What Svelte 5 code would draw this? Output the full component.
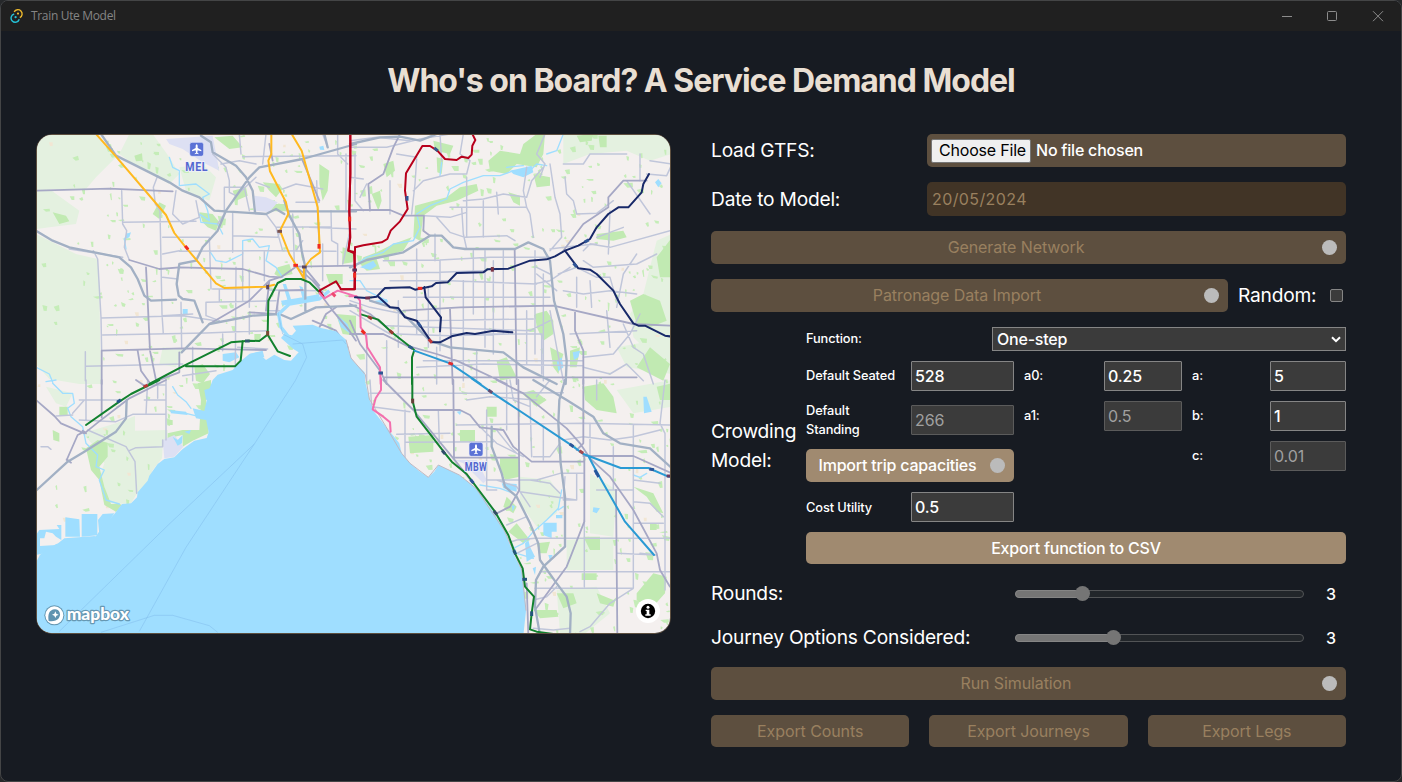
<script>
  // Map geometry is kept in four tiles; every tile has its own local origin.
  const tiles = { nw: [0, 0], ne: [942, 0], sw: [0, 738], se: [942, 738] };
  const move = (q) => `translate(${tiles[q][0]} ${tiles[q][1]})`;

  let seed = 11;
  const rnd = () => {
    seed = (seed * 16807) % 2147483647;
    return seed / 2147483647;
  };
  const parks = [];
  for (let i = 0; i < 950; i++) {
    const x = rnd() * 1905;
    const y = rnd() * 1500;
    const w = 5 + rnd() * rnd() * 24;
    const h = 5 + rnd() * rnd() * 20;
    const s = (rnd() - 0.5) * 12;
    if (x < 190 && rnd() < 0.7) continue;
    parks.push(`M${x.toFixed(0)} ${y.toFixed(0)}l${w.toFixed(0)} ${s.toFixed(0)}l${(-s / 2).toFixed(0)} ${h.toFixed(0)}l${(-w * 0.6).toFixed(0)} ${(-s / 3).toFixed(0)}z`);
  }
  const parkPath = parks.join('');
  const sand = [];
  for (let i = 0; i < 60; i++) {
    sand.push(`M${(rnd() * 1905).toFixed(0)} ${(rnd() * 1500).toFixed(0)}h${(6 + rnd() * 9).toFixed(0)}v${(6 + rnd() * 9).toFixed(0)}h-8z`);
  }
  const sandPath = sand.join('');

  const pale = [
    ['nw', 'M0 0H175L240 70 180 130 150 165H40L130 230 120 270 40 280 0 285ZM0 300L60 330 120 360 185 375 190 470 195 750 130 750 40 735 0 690ZM280 0H350L400 70 430 120 400 150 300 95 250 60ZM430 100L500 90 540 130 520 200 450 170ZM380 640L440 645 420 700 370 690Z'],
    ['ne', 'M640 0H966V60L900 80 830 50 720 60 640 90ZM860 10H920V60H860ZM920 320L966 300V700L900 660 850 610 840 540 880 480ZM800 640L966 610V720L830 700Z'],
    ['sw', 'M140 160L240 130 297 108 297 152 395 150 395 180 380 200 378 235 350 270 335 310 300 345 285 370 240 372 215 368 205 320 190 295 205 250 180 205ZM30 20L110 40 90 80 60 70Z'],
    ['se', 'M510 290L600 300 635 350 620 400 560 440 510 370ZM650 480L790 470V570H650ZM720 280L800 330 790 470 720 460ZM620 630L740 620 780 700 700 765 630 760ZM800 30L966 0V80L850 100Z']
  ];
  const green = [
    ['nw', 'M490 235L530 240 550 265 540 290 515 280 500 265ZM295 65L318 58 320 80 300 82ZM50 235L90 245 100 262 70 270ZM725 400L760 390 770 420 730 430 715 420ZM680 145L730 150 740 165 720 190 700 170ZM850 90L880 110 875 170 860 200 850 150ZM535 10L590 5 620 40 580 45ZM700 210L750 210 750 232 705 232ZM900 540L960 545 960 605 920 600ZM655 600L675 600 672 620 655 620ZM475 700L500 690 522 720 500 748 480 740ZM920 340L955 350 950 385 918 390ZM870 420H920V450H880ZM350 240L370 205 390 215 370 255ZM590 170L630 160 635 185 600 200Z'],
    ['ne', 'M100 90L130 80 135 110 110 130ZM65 180L90 170 95 200 85 230ZM195 215L250 200 290 190 330 160 380 150 385 170 320 200 260 215 220 245 210 320 190 310ZM415 80L450 50 510 60 520 30 560 0H585L580 60 560 100 500 90 470 120 420 110ZM260 70L280 75 275 120 262 115ZM550 120L600 130 600 155 560 160ZM475 175L510 185 510 215 490 205ZM555 540L590 530 610 560 610 600 580 620 560 580ZM840 500L880 480 930 500 950 560 900 580 860 570ZM440 680L470 670 500 730 450 740ZM660 650L690 640 680 700 660 700ZM740 300L820 290 830 310 790 320 740 315ZM680 5L730 0 725 20 690 25ZM745 5H770V40H750ZM920 370L966 310V430L930 430ZM40 370L80 355 130 330 185 310 160 350 80 375 90 405 50 410 30 390ZM600 640L640 660 625 720 610 700ZM860 700L900 640 960 690 940 740ZM250 20L310 35 300 60 255 50Z'],
    ['sw', 'M150 205L185 180 215 188 215 230 190 260 205 320 225 372 255 372 240 395 205 375 190 300 165 270ZM395 160L440 150 490 150 495 60 485 10 525 0 525 40 510 60 515 120 518 160 470 182 440 200 440 165 395 175ZM70 80H95V108H70ZM240 378L258 374 240 396 232 390ZM395 120H410V135H395ZM50 150L70 160 70 185 52 180Z'],
    ['se', 'M175 170L250 165 250 215 180 220ZM330 150H375V185H330ZM450 235H508V290L465 300 450 260ZM500 430L540 480 520 490 475 455ZM700 20L760 10 790 50 800 100 740 90 705 60ZM515 40L550 30 590 60 560 80ZM860 640L910 580 950 590 945 640 900 690 860 660ZM620 640L670 640 680 670 640 685ZM550 690L620 690 625 710 570 715ZM700 470H750V510H720ZM560 490L600 485 590 520 570 520ZM850 320L910 340 940 400 920 395 890 350ZM470 350L500 380 490 400 460 380ZM740 640L790 660 800 650 790 680 750 670ZM695 580H740V600H695ZM920 20L966 10V60H930ZM410 80H440V110H410ZM900 430H920V450H900ZM15 10L45 20 60 60 50 60Z']
  ];
  const lav = [
    ['nw', 'M390 15L530 5 550 110 500 85 440 45 400 30ZM655 185L690 190 725 205 700 235 660 230Z'],
    ['sw', 'M380 180L415 165 442 200 415 230 385 235Z'],
    ['se', 'M312 240L380 240 410 300 400 310 340 250Z']
  ];
  const ponds = [
    ['nw', 'M560 660L600 655 610 670 580 685 560 680ZM440 525H455V540H440ZM850 38L862 35 865 48 852 47ZM900 540L935 570 945 600 915 580ZM270 300L285 295 280 310 268 315ZM735 500L800 490 850 480 850 492 790 502 740 515ZM740 450L750 450 765 495 755 500ZM790 455L800 460 810 490 800 495ZM640 660L680 650 685 670 650 670Z'],
    ['ne', 'M915 145L925 135 935 148 925 160ZM620 680L635 670 640 700 625 712ZM668 655L690 650 685 670 672 678ZM75 500L110 495 115 505 80 510ZM30 400L70 380 80 395 60 408ZM480 110L545 95 550 115 520 130 490 120Z'],
    ['sw', 'M88 412L130 418 132 470H88ZM137 402H184V466L137 470ZM186 420L200 402 235 400 190 466ZM0 465L10 450 70 447 62 435 76 435 76 480 60 470 50 460 30 455 25 475 12 475 12 498 60 495 85 475 180 468 130 500 0 525ZM410 170L425 180 440 165 438 190 425 197ZM402 90L450 95 455 105 405 100ZM470 85L515 95 510 120 480 115ZM505 30L522 25 525 55 510 60ZM445 155L465 150 460 162Z'],
    ['se', 'M580 428H620V455H605V475L580 465ZM618 405H637V415H618ZM730 382L750 385 740 400 728 395ZM880 50L890 50 905 95 882 100ZM525 490L535 480 540 500 555 530 530 545ZM455 310L500 312 500 335 460 325ZM320 95L335 92 330 105ZM485 375L495 378 488 395ZM595 525L608 525 600 542ZM548 565L558 560 555 585Z']
  ];
  const creeks = [
    ['nw', 'M400 70L410 100 430 110 430 155 480 150 520 180 500 190 515 230 520 260 490 240 495 265 545 270 560 300M520 350L540 380 570 385 620 360 620 320 650 315 670 340 700 335 690 380 720 400 740 430M275 300L265 315 270 345M0 700L40 720 50 745'],
    ['ne', 'M590 95L560 90 530 120 490 110 450 125 400 125 340 145 300 165 290 195 240 215 200 240 210 280 190 320 130 330 100 355 50 370 20 390M275 85L270 125M590 60L620 50 640 0M470 100L520 95M0 440L30 440 50 470 90 490 110 500'],
    ['sw', 'M50 10L80 40 110 40 115 70 95 85 105 110 140 140 150 190 185 225 180 260 205 270 190 300 210 360 250 372M60 0L30 5M410 20L425 45 450 65 465 85M450 100L490 110'],
    ['se', 'M635 330L625 385 590 420 550 455 520 490 480 510M390 315L450 325 490 340M440 400L500 520 550 535M850 285L870 292 890 280M640 380L625 390']
  ];
  const minor = [
    ['nw', 'M257 170L260 270 272 290 265 340 280 378M365 125L352 160 358 210 372 230 378 540 382 600M520 310L525 465M590 235V355M600 400L598 700M770 240L775 385M842 140L845 235M905 0V60L935 90M885 230L887 320 905 330 905 395M172 350L185 375 195 550 197 650M435 505L437 640M510 505V545L550 560M655 235L690 240 720 280 740 350M550 465V500M640 410V520M685 350V440M725 500V530M860 330V440M930 60V230M940 300L920 390M620 355V500M260 265L480 262M380 310L520 310M195 552L440 545 540 560M200 603L510 597 695 590M148 697L440 690M148 653V740M720 280L885 278M565 160H625L640 230M565 160V240L545 270M620 68L960 65M430 352L690 350 900 352M530 465H620M510 505L720 500M700 468L850 470M380 545L470 540M605 640L695 645M555 90L610 80 660 90M480 200L490 250 440 270 410 240 420 170M740 165L780 150 860 165M660 145L700 160M780 205H850M100 345L260 370M530 60L570 100 580 140 580 175 600 185 660 130M690 0L680 90M610 0L615 60M860 0L875 40M380 360L430 350M380 430L425 435M470 640V740M640 540V600M690 530H730M560 600V650M440 725L540 710M780 350L800 320M590 305L725 310 735 285M820 280L960 285'],
    ['ne', 'M0 40L110 40 210 15 300 0M0 20L80 10 180 20M200 75L195 150 185 240M270 0L275 80M15 60V200L40 230M0 130L40 135M340 0L330 60 360 80 350 120 300 120 220 140 190 170M335 220L340 300 350 345M225 245L300 250 350 235M350 130L350 310M400 200V310M440 175L445 240M340 200L400 195 460 180 530 190 545 140 580 100M300 220H530M260 250L300 295 345 310 470 305 495 320M530 100L520 170 530 220 540 240 550 310M585 0L560 60 585 90 570 130M600 90L615 190 630 240 635 310 600 350M640 90L700 90 720 60 830 60M645 130L650 180 670 200 680 240 740 238 790 200M870 60V140M830 140L900 240M890 120L950 125 966 90M900 80L966 90M15 420L270 415 400 410M100 380L270 378 420 370 600 370M120 440L300 440 560 450M0 465H120M160 490L600 490M200 560L550 555M110 575L540 590 600 560M200 345V600M235 460V640M270 380V650M340 440V740M370 350V540M405 350V640M430 380V660M460 350V600M555 350V660M580 420V740M255 300V380M305 600H575V720M700 380L730 400 860 390 920 360M625 420L680 400 740 430 780 430 800 500M600 345L680 335 740 330M660 400L600 440 550 450M600 420L560 400M700 350L720 330 780 340 960 290M780 230L775 360M820 280L740 310M860 360L820 420 800 520M640 470L700 480 780 470 860 480M680 520V430M720 440L725 520M600 530L620 640 640 740M700 670L790 660 840 600 870 540M820 570L850 640 880 660 910 750M700 700L780 720 830 690 880 740M770 530L780 640M530 530V690M140 600L300 605 480 600M220 680H700M200 700L400 690 700 695M50 600V740M110 620V750M145 500V640M0 500L60 520 160 540M0 530L120 600M260 640V750M380 650V740M660 600L860 590M620 470L560 420M50 150L30 190M120 140V240M140 60L200 70'],
    ['sw', 'M150 0V120M130 60H250M110 100L145 60M335 0L330 103M390 0V180M130 120L240 125 290 103 390 103M155 150L270 200 297 245 302 340M280 212L300 203 380 200M380 180V200M365 0V55M320 15L390 15M60 108L110 105M15 200L35 200 45 208M325 60L390 60'],
    ['se', 'M110 40L310 40 640 38M165 90V240M265 90L268 190M165 187L430 185M140 163L300 160M410 90V330L440 330M470 0V150M60 0L65 80 180 95M320 135L700 130 960 135M350 60L420 50 560 60M410 300L560 300 630 280 700 280M510 335L680 360M440 500L500 480 555 475 960 475M570 575L960 575M555 625L850 625M850 135V340L850 625 780 670 720 740 690 755M945 0L930 130 945 160V630M790 200V330M645 290L640 360 680 360 680 280M703 420V620M540 300L600 310 630 340M440 150L480 200 500 220M390 140L440 190 520 230M550 660L590 650 620 620M550 745L610 750 660 745M870 520L920 525M850 300L930 310M850 365L900 370 940 410M500 520L560 490M740 0V60M640 180L700 170 780 180 850 170 930 150M720 130V230M630 190L600 230 550 230M470 435L530 410M440 300L500 320 540 380M480 0L490 60 540 80M60 40H110M800 520L920 525M600 0L560 50M540 60L545 230M580 140V240M850 430H940M740 330H850']
  ];
  const major = [
    ['nw', 'M0 170L220 164 410 172M280 378L370 405 430 400 620 405 700 428 735 430 780 398 960 395M330 400L335 500 342 650 362 748M197 750V650L440 643 690 648M305 650L315 710 340 745M520 570L640 500 700 440 730 430M780 398L830 440 860 475M700 440L690 530M805 400L850 455M845 230L850 330M860 490L890 530 940 590 960 620M850 580L870 540 900 520M830 560L900 590 935 640M640 535L720 540 730 470 800 468M430 655L430 715 350 745M700 30L710 80M800 80L850 200'],
    ['ne', 'M150 0L130 40 100 120 55 150 60 230M0 228H120L160 245 222 245 220 290 240 305M494 345L500 750M160 530L330 520 610 515 850 570 966 575M640 350L700 270 775 220 775 190 820 140 890 140M675 530V590L700 650V750M300 525L308 750M0 560L30 630 90 710 110 750M170 635L260 660 320 680 470 750M100 730H860M0 600L100 600 180 640M0 510L60 540 110 580'],
    ['sw', 'M0 60L55 108 75 130 145 160 185 128 280 55 390 0M197 0V112M92 240L125 165 145 155M92 238L105 248M300 0L330 20M140 152L150 160'],
    ['se', 'M505 0L508 330 480 380 440 400M310 0L312 235M190 90H330L360 105 390 142 460 150 490 200 545 245H700M700 0V190L680 210M703 225V425L650 560 555 690M440 0L520 40 650 145 690 190 720 235 780 290 850 390 920 520 930 570 960 620M310 233H505M700 228H850L966 280M798 330L802 765M100 0L190 90 310 235 370 310M530 610L535 765']
  ];
  const highway = [
    ['nw', 'M195 0L240 65 300 95 400 145 440 170 490 190 535 230 690 240 720 225 745 240 M760 232H960M0 290L50 320 100 340 250 370 285 400 305 435 325 485 345 500 420 497M495 5L525 25 530 55 600 95 630 130 650 170 657 235M960 30L800 75 670 100 640 130 570 230 545 290 500 340 480 380 430 390 422 450 428 485 440 495 475 500 500 565M745 200L760 245 790 300 797 350 808 400 808 530M437 655L520 570 650 545 730 540 765 555 840 520 960 515M865 0L875 40'],
    ['ne', 'M0 30L90 10 150 8 210 20 260 0M0 400L50 378 160 355 240 305 275 305 310 340 345 345 495 345 535 325 580 345 600 380 612 500 640 600 650 680 647 750M60 500L140 525 180 560 240 620 300 640 460 655 520 700 620 750'],
    ['sw', 'M0 332L95 245 145 215 240 155 270 115 272 60'],
    ['se', 'M645 0L628 60 625 130 632 250 645 350 645 500 580 560 558 600 555 680 570 765M550 0L650 60 730 110 760 160 810 190 900 205 966 265M425 140L425 200 455 280 465 320 500 350 540 430 565 490 570 540 620 610 650 650 662 700 660 765']
  ];

  const lines = [
    ['nw', '#ffb91f', 'M180 0L235 62 390 243 415 297 447 337 540 448 565 462 690 458 715 452M706 0V60L697 80 702 112 750 205 757 240 732 290 760 360 780 394 805 436M767 0L797 50 845 220 852 355 825 375 804 402 803 436'],
    ['nw', '#12812e', 'M340 750L440 697 585 625 640 620 670 621 695 602 697 500 725 447 750 435 795 435 820 445 850 474M450 697H597L614 680 620 622M695 602L725 652 762 666'],
    ['nw', '#b8001c', 'M943 0V120L940 230 943 310 937 350 955 358M957 340L955 466H915L900 442 850 470 862 487'],
    ['nw', '#f36fae', 'M850 477L865 493 905 470 960 487'],
    ['ne', '#b8001c', 'M1 0V120L-2 230 0 310-5 350 15 355 15 340 40 334 95 325 112 315 122 290 150 262 173 225 165 170 168 118 217 36 240 36 262 50 285 75 320 78 335 68 355 72 365 62 367 35 376 18 368 2M12 355L15 420V466H-28'],
    ['ne', '#12812e', 'M33 541L85 557 125 595 193 648 186 670V750'],
    ['ne', '#f36fae', 'M-2 487H20L30 500 32 580 48 605 52 640 90 700 92 750'],
    ['ne', '#182969', 'M15 490L50 492 80 488 105 462 180 460 195 467 245 457 258 447 293 445 320 417 400 415 412 406 475 404 540 380 590 376 615 367 645 350 685 335 720 315 740 280 775 240 805 220 835 220 875 175 880 150 897 120M645 350L685 403 720 407 740 420 790 470 810 510 850 568 865 575 885 575 945 605 966 608M85 488L120 520 145 522 165 550 200 560 245 625 270 625 305 607 350 597 375 600 430 590 487 595M223 460L227 490 273 550 270 592'],
    ['ne', '#2a9ad4', 'M193 650L300 688 392 750'],
    ['sw', '#12812e', 'M150 135L250 65 285 42 370 0'],
    ['se', '#12812e', 'M187-5V60L200 110 285 220 305 245 350 282 435 395 475 465 495 520 518 565 525 620 552 650 545 700 540 748 560 755 610 762'],
    ['se', '#f36fae', 'M93-5V30L77 55 68 88 100 110 120 127 122 155'],
    ['se', '#2a9ad4', 'M365-5L425 37 665 196 700 222 812 264H895L955 290 966 290M715 228L740 275 825 425 912 525']
  ];
  const stops = [
    ['nw', '#ef2b20', 452, 341, 50], ['nw', '#ef2b20', 849, 337, 90], ['nw', '#ef2b20', 779, 394, 0],
    ['nw', '#5a4560', 695, 459, 90], ['nw', '#5a4560', 805, 399, 0], ['nw', '#79504e', 731, 292, 0],
    ['nw', '#ef2b20', 941, 255, 90], ['nw', '#315b6e', 634, 621, 0], ['nw', '#7b4a34', 695, 598, 90],
    ['nw', '#ee4a70', 893, 482, 45], ['ne', '#ef2b20', 210, 463, 0], ['ne', '#c23a3c', 241, 621, 50],
    ['ne', '#7b3444', 427, 406, 90], ['ne', '#ef2b20', 40, 594, 45], ['ne', '#e32c30', 302, 689, 20],
    ['ne', '#2f5496', 710, 321, 150], ['ne', '#2f5496', 675, 393, 50], ['ne', '#2f5496', 171, 193, 90],
    ['ne', '#37598a', 258, 46, 40], ['ne', '#5a3460', 14, 408, 0], ['ne', '#ef2b20', 14, 424, 90],
    ['ne', '#2f5496', 208, 572, 55], ['ne', '#9a3b31', 60, 551, 30], ['ne', '#9a3b31', 124, 594, 40],
    ['ne', '#2f5496', 92, 717, 0], ['ne', '#713250', 53, 492, 0], ['ne', '#2c5a88', 182, 640, 30],
    ['sw', '#b83430', 329, 18, -25], ['sw', '#215387', 249, 63, -35], ['se', '#634d70', 421, 34, 35],
    ['se', '#a14950', 694, 216, 35], ['se', '#26569c', 738, 276, 62], ['se', '#26569c', 743, 285, 62], ['se', '#2c5598', 665, 196, 35],
    ['se', '#2c5598', 905, 268, 10], ['se', '#304b6b', 281, 217, 50], ['se', '#344d64', 436, 398, 50],
    ['se', '#644038', 188, 63, 90], ['se', '#2c5598', 366, 304, 50], ['se', '#22567b', 494, 517, 65],
    ['se', '#22567b', 524, 598, 0], ['se', '#22567b', 545, 701, 90], ['se', '#6b3a62', 957, 288, 0]
  ];
  const airports = [['nw', 482, 46, 'MEL'], ['se', 378, 208, 'MBW']];

  const sliders = [
    { label: 'Rounds:', value: 3, fill: 23.5 },
    { label: 'Journey Options Considered:', value: 3, fill: 34.3 }
  ];
</script>

{#snippet layer(items, fill)}
  {#each items as [q, d]}<path {d} transform={move(q)} {fill} />{/each}
{/snippet}
{#snippet strokes(items, color, w)}
  {#each items as [q, d]}<path {d} transform={move(q)} fill="none" stroke={color} stroke-width={w} stroke-linejoin="round" stroke-linecap="round" />{/each}
{/snippet}

<div class="window">
  <header>
    <svg class="logo" viewBox="0 0 14 16" width="14" height="16">
      <path d="M4.2 3.9A4.2 4.2 0 1 1 9.8 9.6" fill="none" stroke="#e9b62c" stroke-width="1.4" />
      <path d="M9.3 11.3A4.2 4.2 0 1 1 4.2 6" fill="none" stroke="#25c3d8" stroke-width="1.4" />
      <circle cx="8" cy="5.6" r="1.1" fill="#e9b62c" /><circle cx="5.6" cy="9.2" r="1.1" fill="#25c3d8" />
    </svg>
    <span>Train Ute Model</span>
    <svg class="controls" viewBox="0 0 110 14" width="110" height="14">
      <g fill="none" stroke="#8c8c8c" stroke-width="1">
        <path d="M2 7.5H12" /><rect x="47.5" y="2.5" width="9" height="9" rx="1" /><path d="M93 2.2L103 12.2M103 2.2L93 12.2" />
      </g>
    </svg>
  </header>

  <h1>Who's on Board? A Service Demand Model</h1>

  <main>
    <div class="map">
      <svg viewBox="3 3 1899 1494" width="633" height="498">
        <rect width="1905" height="1500" fill="#f4f0ef" />
        {@render layer(pale, '#e4f1e0')}
        <path d={sandPath} fill="#f2e6d3" />
        <path d={parkPath} fill="#c5edb8" />
        {@render layer(green, '#c1eab2')}
        {@render layer(lav, '#dde0f3')}
        {@render layer(ponds, '#9fdeff')}
        {@render strokes(creeks, '#9fdeff', 4)}
        {@render strokes(minor, '#c0c6da', 4.4)}
        {@render strokes(major, '#a6a8c5', 5.4)}
        {@render strokes(highway, '#a2b0c4', 7)}
        <path fill="#9fdeff" d="M0 1285L12 1262 60 1230 180 1207 198 1180 235 1140 258 1110 285 1108 303 1090 305 1075 335 1040 340 1025 365 990 385 975 415 970 440 945 475 920 512 912 518 895 505 830 520 765 530 738 545 722 590 708 610 685 640 660 665 655 690 678 715 662 745 678 765 680 788 655 772 645 735 612 745 600 768 604 780 590 770 575 830 572 855 582 900 592 930 617 938 650 945 672 960 690 986 715 988 745 1000 795 1012 830 1050 878 1090 928 1097 958 1122 988 1150 1012 1177 1030 1195 1013 1207 993 1270 1023 1320 1063 1372 1133 1405 1190 1432 1258 1457 1308 1465 1370 1470 1430 1462 1505H0Z" />
        <path fill="none" stroke="#9fdeff" stroke-width="10" d="M775 630L735 580 728 540 760 510 850 495 880 470" />
        <path fill="none" stroke="#c0b9c3" stroke-width="3" d="M930 617L945 672 988 722 1000 795 1050 878 1097 958 1122 988 1177 1030 1207 993 1270 1023 1320 1063 1405 1190 1457 1308 1470 1430" />
        <path fill="none" stroke="#83bced" stroke-width="2" opacity=".8" d="M725 530L740 600 800 630 812 670 778 740 655 930 450 1240 310 1492M655 930L400 1170 70 1492M770 630L920 618 930 630M195 1495L355 1444 410 1444 520 1475 545 1495" />
        {#each lines as [q, color, d]}<path {d} transform={move(q)} fill="none" stroke={color} stroke-width="6" stroke-linejoin="round" stroke-linecap="round" />{/each}
        {#each stops as [q, color, x, y, a]}<rect x="-7" y="-4.5" width="14" height="9" fill={color} transform="{move(q)} translate({x} {y}) rotate({a})" />{/each}
        {#each airports as [q, x, y, name]}
          <g transform="{move(q)} translate({x} {y})">
            <rect x="-21" y="-21" width="42" height="42" rx="7" fill="#5b72d6" stroke="#e8ecfb" stroke-width="2" />
            <path d="M0-15C2-15 3-12 3-9V-4L14 2V6L3 3 2 10 6 13V15L0 13-6 15V13L-2 10-3 3-14 6V2L-3-4V-9C-3-12-2-15 0-15Z" fill="#fff" />
            <text x="-34" y="66" class="airport" textLength="68" lengthAdjust="spacingAndGlyphs">{name}</text>
          </g>
        {/each}
        <g transform="translate(55 1444)">
          <circle r="30" fill="#6698b3" /><circle r="27" fill="#fff" />
          <path d="M-17 17C-20 0-17-17 2-18A16 16 0 0 1 14 8C7 17-6 19-17 17Z" fill="#5f93b0" />
          <path d="M3-12L6-5 13-2 6 1 3 8 0 1-7-2 0-5Z" fill="#fff" />
          <text x="37" y="15" class="wordmark" textLength="187" lengthAdjust="spacingAndGlyphs">mapbox</text>
        </g>
        <g transform="translate(1836 1431)">
          <circle r="36" fill="#fff" /><circle r="21.5" fill="#000" />
          <circle cy="-11" r="4.5" fill="#fff" /><path d="M-7-4H4V10H8V14H-8V10H-4V0H-7Z" fill="#fff" />
        </g>
      </svg>
    </div>

    <section class="panel">
      <div class="row field">
        <span class="label">Load GTFS:</span>
        <div class="file"><span class="choose">Choose File</span><span>No file chosen</span></div>
      </div>
      <div class="row field">
        <span class="label">Date to Model:</span>
        <div class="date">20/05/2024</div>
      </div>
      <button class="dim" disabled><span>Generate Network</span><i></i></button>
      <div class="row import">
        <button class="dim" disabled><span>Patronage Data Import</span><i></i></button>
        <span class="label">Random:</span>
        <span class="check"></span>
      </div>

      <div class="crowding">
        <span class="label">Crowding Model:</span>
        <div class="model">
          <div class="function">
            <span>Function:</span>
            <div class="select"><span>One-step</span>
              <svg viewBox="0 0 10 7" width="10" height="7"><path d="M1 1.2L5 5.2 9 1.2" fill="none" stroke="#fff" stroke-width="2" /></svg>
            </div>
          </div>
          <div class="columns">
            <div class="col seats">
              <div class="pair"><span>Default Seated</span><input value="528" /></div>
              <div class="pair tall"><span>Default Standing</span><input value="266" disabled /></div>
              <button><span>Import trip capacities</span><i></i></button>
              <div class="pair low"><span>Cost Utility</span><input value="0.5" /></div>
            </div>
            <div class="col alpha">
              <div class="pair"><span>a0:</span><input value="0.25" /></div>
              <div class="pair"><span>a1:</span><input value="0.5" disabled /></div>
            </div>
            <div class="col abc">
              <div class="pair"><span>a:</span><input value="5" /></div>
              <div class="pair"><span>b:</span><input value="1" /></div>
              <div class="pair"><span>c:</span><input value="0.01" disabled /></div>
            </div>
          </div>
          <button class="short csv"><span>Export function to CSV</span></button>
        </div>
      </div>

      {#each sliders as s}
        <div class="row slide">
          <span class="label">{s.label}</span>
          <div class="track"><div class="fill" style="width: {s.fill}%"></div><div class="thumb"></div></div>
          <span class="value">{s.value}</span>
        </div>
      {/each}

      <button class="dim run" disabled><span>Run Simulation</span><i></i></button>
      <div class="exports">
        <button class="dim short" disabled><span>Export Counts</span></button>
        <button class="dim short" disabled><span>Export Journeys</span></button>
        <button class="dim short" disabled><span>Export Legs</span></button>
      </div>
    </section>
  </main>
</div>

<style>
  :global(body) { background: #26282a; }
  * { box-sizing: border-box; }
  .window {
    width: 1402px; height: 782px; overflow: hidden;
    border: 1px solid #444546; border-radius: 8px;
    background: #171b22; color: #fff;
    font: 16px/24px Inter, sans-serif; font-weight: 500; letter-spacing: -.22px;
  }
  header { height: 30px; display: flex; align-items: center; padding: 0 11px 0 9px; background: #202020; }
  header span { margin-left: 7px; color: #858585; font: 12px/16px "Open Sans", sans-serif; letter-spacing: -.33px; }
  .logo { display: block; }
  .controls { margin-left: auto; display: block; }
  h1 { margin: 30px 0 0; text-align: center; font-size: 32px; line-height: 40px; font-weight: 700; color: #e9dfd3; letter-spacing: -1.02px; }
  main { display: flex; align-items: flex-start; justify-content: space-between; padding: 33px 55px 0 35px; }
  .map { width: 635px; height: 500px; border: 1px solid #5d4f3f; border-radius: 16px; overflow: hidden; }
  .map svg { display: block; }
  .airport { font: 700 38px "Roboto", sans-serif; letter-spacing: 2px; fill: #5467cf; stroke: #eef0fb; stroke-width: 5px; paint-order: stroke; }
  .wordmark { font: 900 50px Lato, sans-serif; letter-spacing: 0; fill: #fff; stroke: #6698b3; stroke-width: 7px; stroke-linejoin: round; paint-order: stroke; }

  .panel { width: 635px; display: flex; flex-direction: column; }
  .row { display: flex; align-items: center; }
  .label { font-size: 19.2px; line-height: 28.8px; font-weight: 400; }
  .field { justify-content: space-between; margin-bottom: 15px; }
  .file, .date { width: 419px; height: 33px; border-radius: 5px; background: #5d4f3f; display: flex; align-items: center; padding-left: 4px; }
  .file span:last-child { padding-bottom: 2px; }
  .date { height: 34px; background: #413426; color: #99805f; font-weight: 400; padding-left: 5px; letter-spacing: .4px; }
  .choose { width: 100px; height: 24px; margin-right: 5px; padding: 0 7px; line-height: 21px; color: #000; background: #efefef; border: 1px solid #767676; border-radius: 2px; font-weight: 400; letter-spacing: -.2px; white-space: nowrap; }
  button {
    width: 100%; height: 33px; border: 0; border-radius: 5px; padding: 0 9px;
    display: flex; align-items: center; gap: 10px;
    background: #a08a70; color: #fff; font: inherit; letter-spacing: -.22px;
  }
  button span { flex: 1; text-align: center; white-space: nowrap; }
  button i { width: 15px; height: 15px; border-radius: 50%; background: #bbb; }
  .dim { background: #5d4f3f; color: #99805f; font-weight: 400; letter-spacing: -.1px; }
  .dim:not(.short) span { padding-bottom: 2px; }
  .short { height: 32px; }
  .import { margin-top: 15px; }
  .import button { width: 517px; margin-right: 10px; }
  .check { width: 13px; height: 13px; margin: 0 3px 0 auto; background: #3b3b3b; border: 1px solid #858585; border-radius: 2px; }

  .crowding { display: flex; align-items: center; justify-content: space-between; margin-top: 15px; }
  .crowding > .label { width: 90px; }
  .model { width: 540px; font-size: 12.8px; line-height: 19.2px; letter-spacing: -.1px; }
  .model button { font-size: 16px; }
  .csv span { padding-top: 2px; }
  .function { display: flex; justify-content: space-between; align-items: center; }
  .select {
    width: 354px; height: 24px; padding: 0 4px; font-size: 16px; display: flex; align-items: center; justify-content: space-between;
    background: #3b3b3b; border: 1px solid #858585; letter-spacing: -.22px;
  }
  .select span { padding-top: 1px; }
  .columns { display: flex; gap: 10px; margin: 10px 0; }
  .col { display: flex; flex-direction: column; gap: 10px; }
  .seats { width: 208px; }
  .alpha { width: 158px; }
  .abc { width: 154px; }
  .pair { display: flex; align-items: center; justify-content: space-between; min-height: 30px; }
  .tall { height: 38px; }
  .tall span { width: 80px; }
  .low span { padding-top: 2px; }
  input {
    width: 103px; height: 30px; margin: 0; padding: 1px 3px; outline: 0;
    background: #3b3b3b; border: 1px solid #858585; border-radius: 1px; color: #fff; font: 500 16px/24px Inter, sans-serif; letter-spacing: -.1px;
  }
  input:disabled { border-color: #5b5b5b; color: #a0a0a0; font-weight: 400; }
  .alpha input { width: 78px; }
  .abc input { width: 76px; }

  .slide { height: 29px; margin-top: 15px; }
  .track { width: 289px; height: 8px; margin-left: auto; display: flex; align-items: center; background: #22262a; border: 1px solid #525456; border-radius: 4px; }
  .fill { height: 8px; margin-left: -1px; background: #757575; border: 1px solid #858585; border-radius: 4px; }
  .thumb { width: 15px; height: 15px; flex: none; margin-left: -7px; border-radius: 50%; background: #757575; }
  .value { width: 42px; padding-left: 22px; }
  .run { margin-top: 15px; }
  .exports { display: grid; grid-template-columns: repeat(3, 1fr); gap: 20px; margin-top: 15px; }
</style>
